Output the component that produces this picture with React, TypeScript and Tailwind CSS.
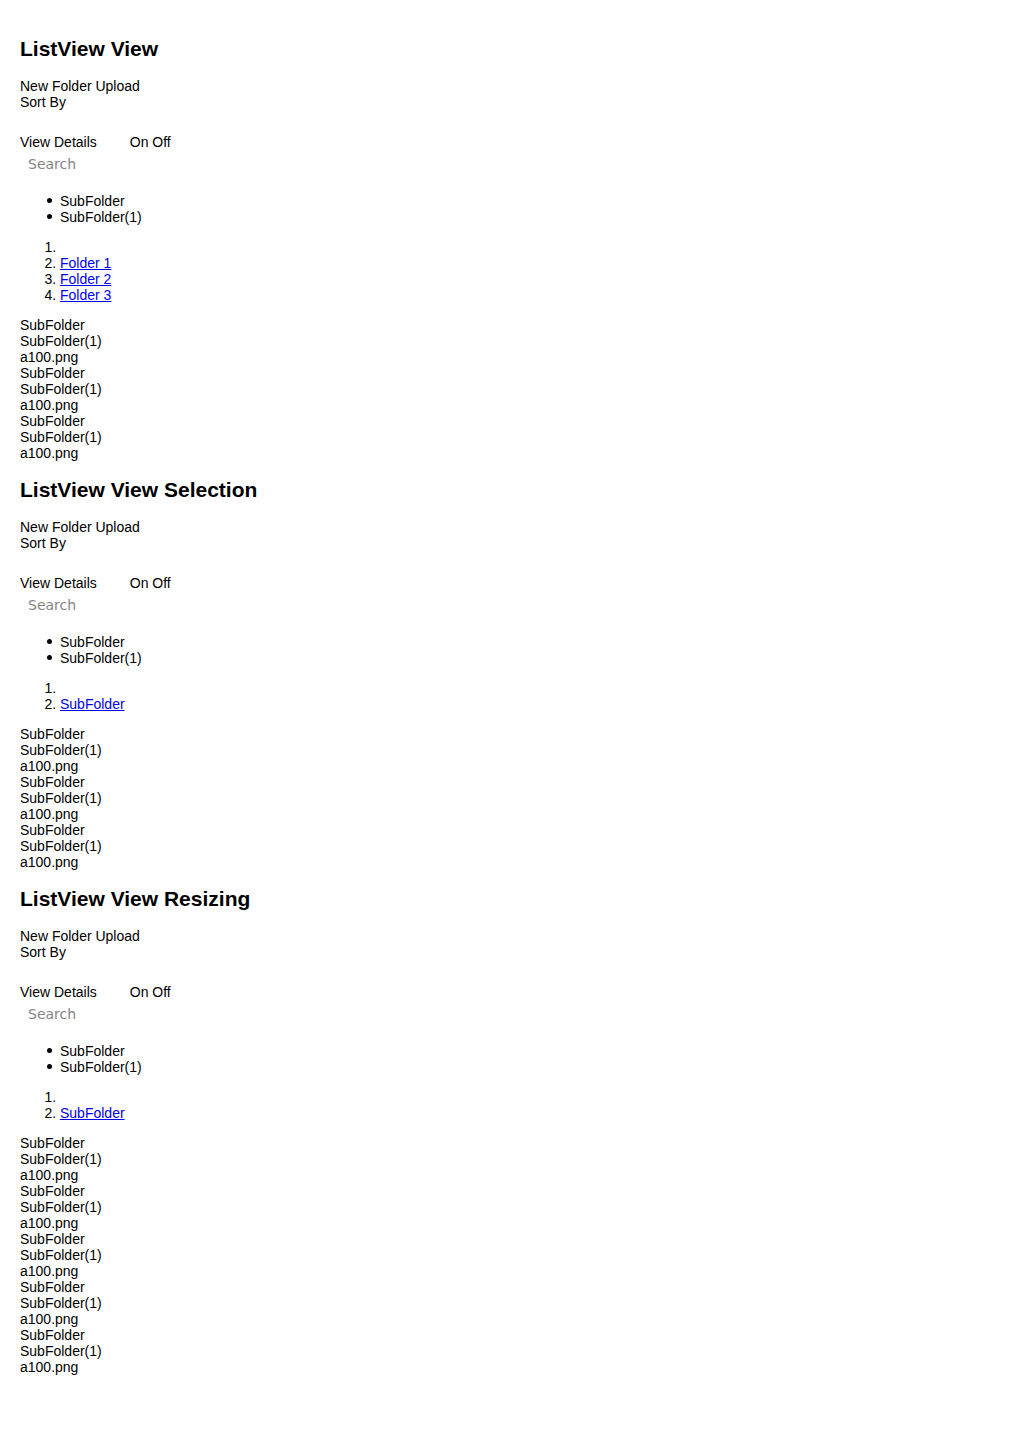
const files = ['SubFolder', 'SubFolder(1)', 'a100.png'];

interface SectionProps {
  title: string;
  crumbs: string[];
  repeat: number;
}

function ListViewSection({ title, crumbs, repeat }: SectionProps) {
  const rows: string[] = [];
  for (let i = 0; i < repeat; i++) rows.push(...files);

  return (
    <section>
      <h2 className="mt-[17.43px] mb-[16.43px] text-[21px] font-bold leading-[24px]">{title}</h2>
      <div className="leading-4">
        <div>New Folder Upload</div>
        <div>Sort By</div>
      </div>
      <div className="mt-6 flex leading-4">
        <span>View Details</span>
        <span className="ml-[33px]">On Off</span>
      </div>
      <div className="h-[29px] pt-[4px]">
        <input
          type="text"
          placeholder="Search"
          className="h-[20px] w-[160px] border-0 pl-2 text-[14px] outline-none placeholder:text-[#858585]"
          style={{ fontFamily: '"DejaVu Sans", sans-serif' }}
        />
      </div>
      <ul className="my-[14px] pl-10 leading-4">
        {['SubFolder', 'SubFolder(1)'].map((s) => (
          <li key={s} className="flex items-start">
            <span className="mt-[5px] -ml-[13px] mr-2 h-[5px] w-[5px] shrink-0 rounded-full bg-black" />
            <span>{s}</span>
          </li>
        ))}
      </ul>
      <ol className="my-[14px] list-decimal pl-10 leading-4">
        <li>&nbsp;</li>
        {crumbs.map((c) => (
          <li key={c}>
            <a href="#" className="text-[#0000ee] underline">
              {c}
            </a>
          </li>
        ))}
      </ol>
      <div className="leading-4">
        {rows.map((r, i) => (
          <div key={i}>{r}</div>
        ))}
      </div>
    </section>
  );
}

export default function App() {
  return (
    <div
      className="bg-white px-5 pt-5 pb-[70px] text-[14px] text-black"
      style={{ fontFamily: '"Liberation Sans", Arial, sans-serif' }}
    >
      <ListViewSection title="ListView View" crumbs={['Folder 1', 'Folder 2', 'Folder 3']} repeat={3} />
      <ListViewSection title="ListView View Selection" crumbs={['SubFolder']} repeat={3} />
      <ListViewSection title="ListView View Resizing" crumbs={['SubFolder']} repeat={5} />
    </div>
  );
}
